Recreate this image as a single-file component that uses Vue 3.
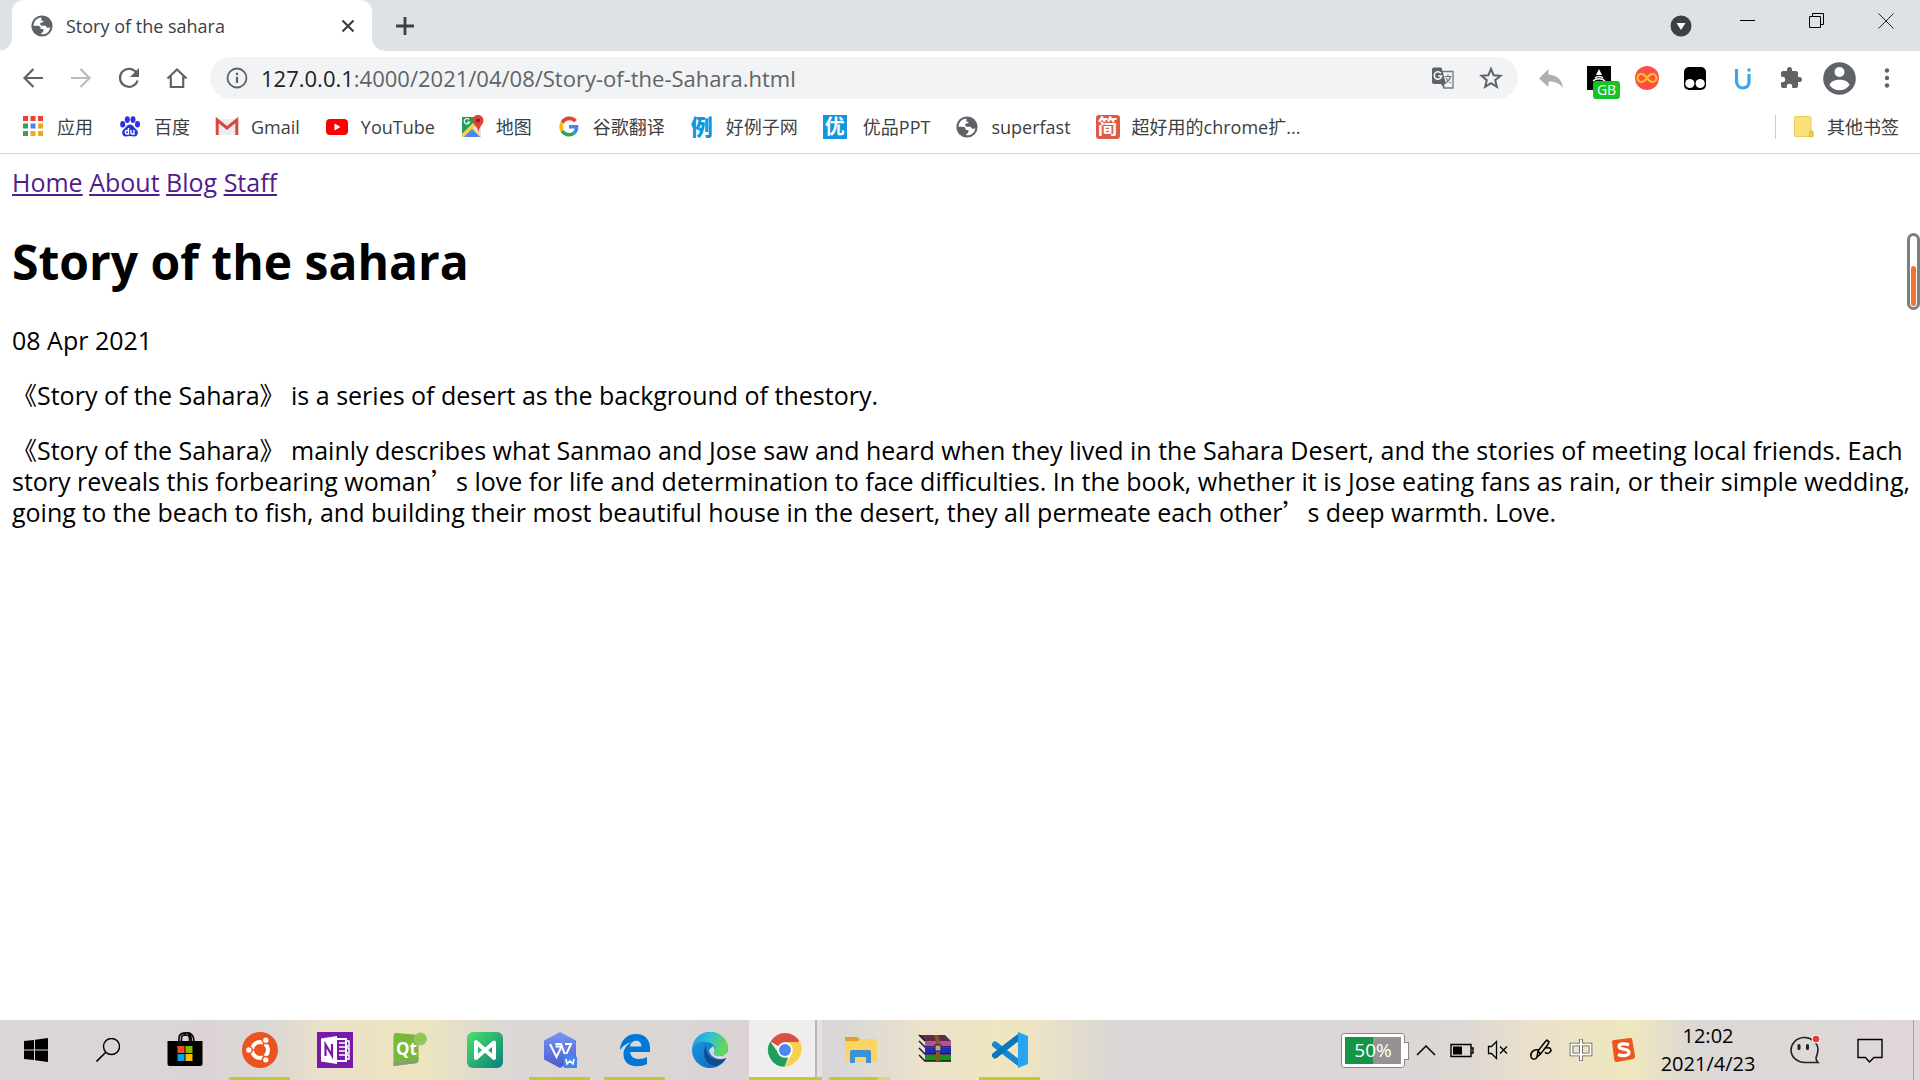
<script setup>
import { ref } from 'vue'

const tabTitle = 'Story of the sahara'
const host = '127.0.0.1'
const path = ref(':4000/2021/04/08/Story-of-the-Sahara.html')
const navLinks = ['Home', 'About', 'Blog', 'Staff']
const appSquares = [
  ['#e94235', '#e94235', '#e94235'],
  ['#34a05a', '#3d8bf0', '#f0a81c'],
  ['#34a05a', '#f0a81c', '#f0a81c'],
]
</script>

<template>
  <div class="screen">
    <header class="browser">
      <div class="tab-strip">
        <div class="tab">
          <svg class="i22" viewBox="0 0 22 22"><circle cx="11" cy="11" r="10.6" fill="#5f6368" /><path d="M10.5 2.6c-4.4.3-7.8 3.8-8 8.2h4.500c1.500 0 2.600.9 2.600 2.300v.9h2.900l-.2 2.500-2.600 2.600c5 1 9.200-2.300 9.600-7.200-1 .9-2.300 1.100-3.500.5l-1.300-1.600h-3.500c-1.100 0-1.800-.7-1.800-1.700 0-1.200.9-1.900 2-1.900h1.100V5.700h-2z" fill="#fff" /></svg>
          <span class="tab-title">{{ tabTitle }}</span>
          <button class="plain tab-close" aria-label="Close tab"><svg class="i22" viewBox="0 0 22 22"><path d="M5.500 5.500l11 11m0-11l-11 11" stroke="#3c4043" stroke-width="2.200" /></svg></button>
        </div>
        <button class="plain new-tab" aria-label="New tab"><svg class="i22" viewBox="0 0 22 22"><path d="M11 2v18M2 11h18" stroke="#3c4043" stroke-width="2.800" /></svg></button>
        <div class="window-buttons">
          <button class="plain search-tabs" aria-label="Search tabs"><svg class="i22" viewBox="0 0 22 22"><circle cx="11" cy="11" r="10.500" fill="#3c4043" /><path d="M6.500 8h9L11 15z" fill="#fff" /></svg></button>
          <button class="plain" aria-label="Minimize"><svg class="i16" viewBox="0 0 16 16"><path d="M0 7.500h15" stroke="#000" /></svg></button>
          <button class="plain" aria-label="Restore"><svg class="i16" viewBox="0 0 16 16"><path d="M.5 3.500h11v11H.5zM3.500 3.500v-3h11v11h-3" fill="none" stroke="#000" /></svg></button>
          <button class="plain" aria-label="Close window"><svg class="i16" viewBox="0 0 16 16"><path d="M.5.5l15 15m0-15l-15 15" stroke="#222" /></svg></button>
        </div>
      </div>

      <div class="toolbar">
        <button class="plain tool" aria-label="Back"><svg class="i24" viewBox="0 0 24 24"><path d="M22 12H4M12.500 3L3.500 12l9 9" fill="none" stroke="#5f6368" stroke-width="2.200" /></svg></button>
        <button class="plain tool" aria-label="Forward"><svg class="i24" viewBox="0 0 24 24"><path d="M2 12h18M11.500 3l9 9-9 9" fill="none" stroke="#babcbe" stroke-width="2.200" /></svg></button>
        <button class="plain tool" aria-label="Reload"><svg class="i24" viewBox="0 0 24 24"><path d="M19.600 7A9 9 0 1 0 20.600 14.500" fill="none" stroke="#5f6368" stroke-width="2.200" /><path d="M22 2v9h-9z" fill="#5f6368" /></svg></button>
        <button class="plain tool" aria-label="Home"><svg class="i24" viewBox="0 0 24 24"><path d="M2.500 12.500L12 3.500l9.500 9M5.800 10.500V21h12.400V10.500" fill="none" stroke="#5f6368" stroke-width="2.200" /></svg></button>
        <div class="omnibox">
          <svg class="i22" viewBox="0 0 22 22"><circle cx="11" cy="11" r="9.500" fill="none" stroke="#5f6368" stroke-width="1.800" /><path d="M11 9.700v6.300M11 5.800v2.200" stroke="#5f6368" stroke-width="2.200" /></svg>
          <label class="url"><span>{{ host }}</span><input v-model="path" aria-label="Address" /></label>
          <button class="plain tool" aria-label="Translate this page"><svg class="i24" viewBox="0 0 24 24"><path d="M11 5.500h11v16.500H13z" fill="#f1f3f4" stroke="#76797d" stroke-width="1.300" /><path d="M13.500 10.500h7M17 8.500v2M19.500 10.500c-.7 3-2.500 5-5 6.500M15 12c1 2.500 2.500 4 5 5" fill="none" stroke="#76797d" stroke-width="1.200" /><path d="M3 1.500h7.500L15 18H3a2 2 0 0 1-2-2V3.500a2 2 0 0 1 2-2z" fill="#5f6368" /><path d="M10 18l3 4.500V18z" fill="#5f6368" /><path d="M9.800 7.200A3.700 3.700 0 1 0 10.600 10H7.200" fill="none" stroke="#fff" stroke-width="1.500" /></svg></button>
          <button class="plain tool" aria-label="Bookmark this page"><svg class="i24" viewBox="0 0 24 24"><path d="M12 2.800l2.600 6.400 6.900.5-5.300 4.500 1.700 6.700L12 17.200l-5.900 3.700 1.700-6.700L2.500 9.700l6.900-.5z" fill="none" stroke="#5f6368" stroke-width="2" /></svg></button>
        </div>
        <button class="plain tool" aria-label="Undo"><svg class="i24" viewBox="0 0 24 24"><path d="M0 12.500L9.500 3v5.500C18 9 23 13.500 24 22c-3.500-5-7.500-6.500-14.500-6.500V21z" fill="#adafb1" /></svg></button>
        <button class="plain tool badge-host" aria-label="Proxy">
          <svg class="i24" viewBox="0 0 24 24"><path d="M0 0h24v24H0z" fill="#000" /><path d="M12 3l3 6H9z" fill="#fff" /><path d="M8 12c2-2 6-2 8 0M6 15c3-3 9-3 12 0" fill="none" stroke="#fff" stroke-width="1.300" /></svg>
          <span class="badge">GB</span>
        </button>
        <button class="plain tool" aria-label="Infinity"><svg class="i24" viewBox="0 0 24 24"><circle cx="12" cy="12" r="12" fill="#fc4f4b" /><path d="M12 12c-2-3-3.500-4-5.500-4a4 4 0 0 0 0 8c2 0 3.500-1 5.500-4s3.500-4 5.500-4a4 4 0 0 1 0 8c-2 0-3.500-1-5.500-4z" fill="none" stroke="#ffc21c" stroke-width="2.200" /></svg></button>
        <button class="plain tool" aria-label="Tampermonkey"><svg class="i24" viewBox="0 0 24 24"><rect x="1" y="1" width="22" height="23" rx="5" fill="#000" /><circle cx="6.800" cy="17.500" r="4.600" fill="#fff" /><circle cx="17.200" cy="17.500" r="4.600" fill="#fff" /></svg></button>
        <button class="plain tool" aria-label="uTools"><svg class="i24" viewBox="0 0 24 24"><path d="M5.500 3v12c0 4 2.500 7 6.500 7 3.500 0 6-2.500 6-6V8" fill="none" stroke="#3da4ec" stroke-width="3.200" /><path d="M16.500 2.500h3v3h-3z" fill="#3da4ec" /></svg></button>
        <button class="plain tool" aria-label="Extensions"><svg class="i24" viewBox="0 0 24 24"><path d="M20.500 11H19V7c0-1.100-.9-2-2-2h-4V3.500a2.500 2.500 0 0 0-5 0V5H4c-1.100 0-2 .9-2 2v3.800h1.500a2.700 2.700 0 0 1 0 5.400H2V20c0 1.100.9 2 2 2h3.800v-1.500a2.700 2.700 0 0 1 5.400 0V22H17c1.100 0 2-.9 2-2v-4h1.500a2.500 2.500 0 0 0 0-5z" fill="#5f6368" /></svg></button>
        <button class="plain tool" aria-label="Profile"><svg class="i33" viewBox="0 0 33 33"><circle cx="16.500" cy="16.500" r="16.300" fill="#5f6368" /><circle cx="16.500" cy="10" r="5" fill="#fff" /><path d="M6.500 23c2-7 18-7 20 0-4.500 7-15.500 7-20 0z" fill="#fff" /></svg></button>
        <button class="plain tool" aria-label="Menu"><svg class="i24" viewBox="0 0 24 24"><g fill="#5f6368"><circle cx="12" cy="4.500" r="2.200" /><circle cx="12" cy="12" r="2.200" /><circle cx="12" cy="19.500" r="2.200" /></g></svg></button>
      </div>

      <nav class="bookmarks">
        <a href="#"><svg class="i24" viewBox="0 0 24 24"><g v-for="(row, r) in appSquares" :key="r"><rect v-for="(c, i) in row" :key="i" :x="2 + i * 7.5" :y="1 + r * 7.5" width="5" height="5" :fill="c" /></g></svg>应用</a>
        <a href="#"><svg class="i24" viewBox="0 0 24 24"><g fill="#2932e1"><ellipse cx="4.700" cy="9.300" rx="2.500" ry="3.200" /><ellipse cx="9.300" cy="4.600" rx="2.500" ry="3.400" /><ellipse cx="15" cy="4.600" rx="2.500" ry="3.400" /><ellipse cx="19.500" cy="9.300" rx="2.500" ry="3.200" /><path d="M12 9.500c3 0 4 3 6.500 5 2.500 2.200 1.500 7-2 7-1.500 0-3-.4-4.500-.4s-3 .4-4.500.4c-3.500 0-4.500-4.800-2-7 2.500-2 3.500-5 6.500-5z" /></g><path d="M10.500 13v6H9a1.700 1.700 0 0 1 0-3.500h1.500M13 15v3c0 .7.500 1 1 1h2v-4" fill="none" stroke="#fff" stroke-width="1.400" /></svg>百度</a>
        <a href="#"><svg class="i24" viewBox="0 0 24 24"><path d="M2 4h20v16H2z" fill="#ededed" /><path d="M2.200 20V5L12 13l9.800-8v15" fill="none" stroke="#d94a3e" stroke-width="3" /></svg>Gmail</a>
        <a href="#"><svg class="i24" viewBox="0 0 24 24"><rect x="1" y="4" width="22" height="16" rx="4" fill="#f00" /><path d="M9.500 8.500l6 3.500-6 3.500z" fill="#fff" /></svg>YouTube</a>
        <a href="#"><svg class="i24" viewBox="0 0 24 24"><path d="M2 2h18v20H2z" fill="#e5e8ea" /><path d="M2 2h17L2 19z" fill="#279a58" /><path d="M2 19L14 8l7 13v1H2z" fill="#f6cf40" /><path d="M4 22l8-8 8 8z" fill="#4a86ef" /><path d="M13 13l8 9V7z" fill="#e1e4e7" /><path d="M18 0c3.500 0 5.500 2.500 5.500 5.500 0 4-4 5.500-5 11.500-1-6-6-7.500-6-11.500C12.500 2.500 14.500 0 18 0z" fill="#de4436" /><circle cx="18" cy="5.500" r="1.900" fill="#7c231b" /><path d="M9 4.500a2.700 2.700 0 1 0 .5 2.500H7" fill="none" stroke="#fff" stroke-width="1.200" /></svg>地图</a>
        <a href="#"><svg class="i24" viewBox="0 0 24 24"><g fill="none" stroke-width="3.600"><path d="M18.500 6.200A8 8 0 0 0 5.200 7.800" stroke="#e24335" /><path d="M5.200 7.800a8 8 0 0 0 0 8" stroke="#f5ba14" /><path d="M5.200 15.800a8 8 0 0 0 11.800 2.300" stroke="#34a353" /><path d="M17 18.100A8 8 0 0 0 19.500 11.800H12" stroke="#4285f4" /></g></svg>谷歌翻译</a>
        <a href="#"><b class="glyph li">例</b>好例子网</a>
        <a href="#" class="wide"><b class="glyph you">优</b>优品PPT</a>
        <a href="#"><svg class="i24" viewBox="-1 -1 24 24"><circle cx="11" cy="11" r="10.600" fill="#5f6368" /><path d="M10.500 2.600c-4.400.3-7.800 3.800-8 8.200h4.500c1.500 0 2.600.9 2.600 2.300v.9h2.900l-.2 2.500-2.600 2.600c5 1 9.200-2.300 9.600-7.200-1 .9-2.300 1.100-3.500.5l-1.300-1.600h-3.500c-1.100 0-1.800-.7-1.800-1.700 0-1.200.9-1.900 2-1.900h1.100V5.700h-2z" fill="#fff" /></svg>superfast</a>
        <a href="#"><b class="glyph jian">简</b>超好用的chrome扩...</a>
        <a href="#" class="other"><svg class="i24" viewBox="0 0 24 24"><path d="M4.500 1.500h14a1.500 1.500 0 0 1 1.500 1.500v12.500c1.500 0 2 .5 2 1.500v4.500H4.500a1 1 0 0 1-1-1v-18a1 1 0 0 1 1-1z" fill="#fbdf79" stroke="#eccd5c" /><path d="M18.500 21.500v-4a1.500 1.500 0 0 1 3 0v4z" fill="#f8d44f" stroke="#d9b337" /></svg>其他书签</a>
      </nav>
    </header>

    <main class="page">
      <nav class="site-nav"><template v-for="link in navLinks" :key="link"><a href="#">{{ link }}</a>{{ ' ' }}</template></nav>
      <h1>Story of the sahara</h1>
      <p>08 Apr 2021</p>
      <p>《Story of the Sahara》 is a series of desert as the background of thestory.</p>
      <p>
        《Story of the Sahara》 mainly describes what Sanmao and Jose saw and heard when they lived in the Sahara Desert, and the stories of meeting local friends. Each<br />
        story reveals this forbearing woman<span class="cjk">’</span>s love for life and determination to face difficulties. In the book, whether it is Jose eating fans as rain, or their simple wedding,<br />
        going to the beach to fish, and building their most beautiful house in the desert, they all permeate each other<span class="cjk">’</span>s deep warmth. Love.
      </p>
      <div class="gauge"><div class="gauge-fill"></div></div>
    </main>

    <footer class="taskbar">
      <button class="plain start" aria-label="Start"><svg class="i24" viewBox="0 0 24 24"><path d="M0 3l10-1v9.500H0zM11 1.800L24 0v11.500H11zM0 12.500h10V22L0 21zM11 12.500h13V24l-13-1.800z" /></svg></button>
      <button class="plain start" aria-label="Search"><svg class="i24" viewBox="0 0 24 24"><circle cx="15.500" cy="8.500" r="8" fill="none" stroke="#000" stroke-width="1.400" /><path d="M9.800 14.200L.5 23.500" stroke="#000" stroke-width="1.600" /></svg></button>
      <div class="apps">
        <button class="plain app" aria-label="Microsoft Store"><svg class="i36" viewBox="0 0 36 36"><path d="M12 10V6c0-5 8-7 11-3 1.500 2 1.500 4 1.500 7M14.500 10V6c0-4 8-4 8 0v4M17 2c5-3 10 0 10 8" fill="none" stroke="#000" stroke-width="1.600" /><path d="M.5 9h35v23a2 2 0 0 1-2 2h-31a2 2 0 0 1-2-2z" /><path d="M10.500 14H17.500v7H10.500z" fill="#f25022" /><path d="M18.500 14h7v7h-7z" fill="#7fba00" /><path d="M10.500 22h7v7h-7z" fill="#00a4ef" /><path d="M18.500 22h7v7h-7z" fill="#ffb900" /></svg></button>
        <button class="plain app open" aria-label="Ubuntu"><svg class="i36" viewBox="0 0 36 36"><circle cx="18" cy="18" r="18" fill="#e95420" /><circle cx="18" cy="18" r="8" fill="none" stroke="#fff" stroke-width="4" /><g stroke="#e95420" stroke-width="1.500"><path d="M8 18h5M23 9.300L20.500 14M23 26.700L20.500 22" /><circle cx="6.800" cy="18" r="3.400" fill="#fff" /><circle cx="23.800" cy="8.200" r="3.400" fill="#fff" /><circle cx="23.800" cy="27.800" r="3.400" fill="#fff" /></g></svg></button>
        <button class="plain app" aria-label="OneNote"><svg class="i36" viewBox="0 0 36 36"><path d="M0 0h36v36H0z" fill="#7719aa" /><path d="M20 7h9v22h-9" fill="none" stroke="#fff" stroke-width="2" /><path d="M22 11h6M22 15h6M22 19h6M22 23h6M29 9h3v5h-3M29 16h3v5h-3M29 23h3v4h-3" fill="none" stroke="#fff" stroke-width="1.500" /><path d="M4 6.500L20 4v28L4 29.500z" fill="#fff" /><path d="M8.500 24V12.500L15 23.500V12" fill="none" stroke="#7719aa" stroke-width="2.200" /></svg></button>
        <button class="plain app" aria-label="Qt"><svg class="i36" viewBox="0 0 36 36"><path d="M1.500 4c0-2 1-3 3-3l22 2v25c0 2-1 3-3 3.200L1.500 34z" fill="#78b83a" /><path d="M1.500 31l23-3 2-2v2c0 2-1 3-3 3.200L1.500 34z" fill="#8c9a83" /><path d="M25 12l-3 3" stroke="#a0a89a" stroke-width="2" /><circle cx="28.500" cy="7" r="6" fill="#8fca50" stroke="#a8b69b" /><text x="4" y="23" font-size="17" font-weight="bold" fill="#fff">Qt</text></svg></button>
        <button class="plain app" aria-label="MindMaster"><svg class="i36" viewBox="0 0 36 36"><defs><linearGradient id="mm" x2="1" y2="1"><stop stop-color="#4be16a" /><stop offset="1" stop-color="#087f7d" /></linearGradient></defs><rect width="36" height="36" rx="6" fill="url(#mm)" /><path d="M9 10v16L27 10.500V26L9 10z" fill="none" stroke="#fff" stroke-width="4" stroke-linejoin="round" /></svg></button>
        <button class="plain app open" aria-label="WPS Writer"><svg class="i36" viewBox="0 0 36 36"><defs><linearGradient id="wps" x2="0" y2="1"><stop stop-color="#7695f5" /><stop offset="1" stop-color="#4b5bcd" /></linearGradient></defs><path d="M18 0l16 8.500v19L18 36 2 27.500v-19z" fill="url(#wps)" /><path d="M8 12l6.500 13 5-10.500h-6M13.500 12h5.500l4.500 12 5.500-12h-6" fill="none" stroke="#fff" stroke-width="2" /><path d="M22 22h8l5 3v11H22z" fill="#4384ed" /><path d="M24 27l1 5 3-3 3 3 1-5" fill="none" stroke="#fff" stroke-width="1.600" /></svg></button>
        <button class="plain app open" aria-label="Edge Legacy"><svg class="i36" viewBox="0 0 36 36"><path d="M3 16C5 6.500 11 2 19 2c9 0 14 6 14 14v4H13c1 5 4 7 9 7 3.500 0 6-.8 8-2v7c-3 1.500-6 2.200-10 2.200-9 0-13.500-5-13.500-12 0-5 3-9.500 8-12-5 1-9 3.500-11.500 7.800zM13 14.500h11.500C24.500 6.500 14 7 13 14.500z" fill="#0078d7" fill-rule="evenodd" /></svg></button>
        <button class="plain app" aria-label="Edge"><svg class="i36" viewBox="0 0 36 36"><defs><linearGradient id="et" x2="1" y2=".3"><stop stop-color="#1d9be8" /><stop offset=".5" stop-color="#2fc3d2" /><stop offset="1" stop-color="#66d853" /></linearGradient><linearGradient id="eb" x2="1" y2="1"><stop stop-color="#1b9de2" /><stop offset="1" stop-color="#0a63bd" /></linearGradient></defs><circle cx="18" cy="18" r="18" fill="url(#eb)" /><path d="M1 12C4 4 11 0 18 0c10 0 18 7 18 16 0 5-4 8-8 8-4 0-7-1-6-3 3-5 0-9-5-10.500C11 8.500 4 10 1 15z" fill="url(#et)" /><path d="M14 14c-4 5-2 19 9 20 5-.5 9-4 11-8-9 4-20 1-20-12z" fill="#114b90" /><path d="M22 21c-1 2 2 3 6 3 3 0 7-2 8-6v7l-2 1c-6 3-16 0-17-8l4-4c2 2 2 5 1 7z" fill="#dcd7d8" /></svg></button>
        <button class="plain app open active" aria-label="Chrome"><svg class="i36" viewBox="0 0 36 36"><path d="M18 18L3.500 9.500a17 17 0 0 1 29-.5z" fill="#d94f43" /><path d="M3.300 9.500L12 22l9 4-3.500 8.700A16.700 16.700 0 0 1 3.300 9.500z" fill="#1f9d5a" /><path d="M18 10h15.300c2.400 5 1.600 13-3 18-3 3.500-8 6.700-12.800 6.700L25 22z" fill="#f9cf4f" /><circle cx="18" cy="18" r="7.800" fill="#fff" /><circle cx="18" cy="18" r="6" fill="#4b87f0" /></svg></button>
        <button class="plain app open grouped" aria-label="File Explorer"><svg class="i36" viewBox="0 0 36 36"><path d="M3 5h12l3 2-2 4H3z" fill="#dba32c" /><path d="M3 9h13l2-2h17v23H3z" fill="#fcd462" /><path d="M8 31V20a2 2 0 0 1 2-2h17a2 2 0 0 1 2 2v11h-5v-6H13v6z" fill="#3b92d8" /></svg></button>
        <button class="plain app" aria-label="WinRAR"><svg class="i36" viewBox="0 0 36 36"><path d="M2 3h26l6 6H8z" fill="#5c2d49" /><path d="M8 9h26v6H8z" fill="#b4519f" /><path d="M8 16h26v6H8z" fill="#1f2bc4" /><path d="M8 23h26v6H8z" fill="#159417" /><path d="M2 3l6 6v20l-6-6z" fill="#e4dfdc" /><path d="M2 9l6 6h26M2 16l6 6h26M2 23l6 6h26M2 3l6 6" fill="none" stroke="#181422" stroke-width="1.400" /><path d="M17 3h4l2 6v20h-4V9z" fill="#8c5424" /><rect x="18" y="13" width="6" height="6" fill="#aaa" stroke="#222" /></svg></button>
        <button class="plain app open" aria-label="Visual Studio Code"><svg class="i36" viewBox="0 0 36 36"><path d="M3 12.500L27 31" stroke="#1588d1" stroke-width="6" stroke-linecap="round" /><path d="M3 23.500L27 5" stroke="#0a76bd" stroke-width="6" stroke-linecap="round" /><path d="M26 0l10 4v28l-10 4z" fill="#27a5f2" /></svg></button>
      </div>

      <div class="tray">
        <div class="battery"><span>50%</span></div>
        <button class="plain t-chevron" aria-label="Show hidden icons"><svg class="i20" viewBox="0 0 20 20"><path d="M1 15l9-9 9 9" fill="none" stroke="#000" stroke-width="1.500" /></svg></button>
        <button class="plain t-power" aria-label="Power"><svg class="i24" viewBox="0 0 24 24"><path d="M1 6.500h20v12H1zM21.500 10h1.500v5h-1.500" fill="none" stroke="#000" stroke-width="1.400" /><path d="M3 8.500h9v8H3z" /></svg></button>
        <button class="plain t-sound" aria-label="Volume muted"><svg class="i24" viewBox="0 0 24 24"><path d="M2.500 8.500h3l5-5v17l-5-5h-3zM14 8.500l7 7m0-7l-7 7" fill="none" stroke="#000" stroke-width="1.300" /></svg></button>
        <button class="plain t-pen" aria-label="Ink workspace"><svg class="i24" viewBox="0 0 24 24"><path d="M8 19l1-6 7-9 2-2 2 2-1.500 3-7 9zM9 13l2.500 3M9.500 12C4 11 1 15 2 19c1 3 5 3 6 0M17 10c5-1 6 2 4 4s-4 2-5 0" fill="none" stroke="#000" stroke-width="1.500" /></svg></button>
        <button class="plain t-ime" aria-label="Input language"><svg class="i24" viewBox="0 0 24 24"><path d="M2.500 6.500h19v10h-19zM12 1v22" fill="none" stroke="#555" stroke-width="3.600" /><path d="M2.500 6.500h19v10h-19zM12 1.500v21" fill="none" stroke="#fff" stroke-width="2" /></svg></button>
        <button class="plain t-sogou" aria-label="Sogou"><svg class="i24" viewBox="0 0 24 24"><path d="M1 4c0-1 .5-2 2-2l16-2c1.500 0 2 .5 2.300 2L24 18c0 2-.5 2.500-2 3L6 24c-1.500 0-2.500-.5-2.700-2z" fill="#ef5521" /><path d="M18 7c-4-2-10-1.500-10 1.500 0 4 10 1 10 6 0 3.500-7 4-11 2" fill="none" stroke="#fff" stroke-width="3.200" /></svg></button>
        <time class="clock"><span>12:02</span><span>2021/4/23</span></time>
        <button class="plain t-ghost" aria-label="Assistant"><svg class="i30" viewBox="0 0 30 30"><path d="M28 27.500H15A13.500 12.500 0 1 1 28 14c0 4-1 6-2 9 0 2 .5 3 2 4.500z" fill="none" stroke="#222" stroke-width="1.600" /><path d="M9 10.500v3M17.500 10.500v3" stroke="#222" stroke-width="3" stroke-linecap="round" /><circle cx="26" cy="4" r="4" fill="#e8393c" stroke="#fff" /></svg></button>
        <button class="plain t-note" aria-label="Notifications"><svg class="i26" viewBox="0 0 26 26"><path d="M1 2.500h24v18h-8L12.500 25 8.500 20.500H1z" fill="none" stroke="#000" stroke-width="1.400" /></svg></button>
      </div>
      <button class="plain desktop" aria-label="Show desktop"></button>
    </footer>
  </div>
</template>

<style>
body {
  margin: 0;
  background: #fff;
}
</style>

<style scoped>
.screen {
  display: flex;
  flex-direction: column;
  min-height: 100vh;
  font-family: "Open Sans", "Noto Sans CJK SC", sans-serif;
  color: #000;
}
svg {
  display: block;
  flex: none;
}
.plain {
  display: flex;
  align-items: center;
  justify-content: center;
  padding: 0;
  border: 0;
  background: none;
  font: inherit;
}
.i16 { width: 16px; height: 16px; }
.i20 { width: 20px; height: 20px; }
.i22 { width: 22px; height: 22px; }
.i24 { width: 24px; height: 24px; }
.i26 { width: 26px; height: 26px; }
.i30 { width: 30px; height: 30px; }
.i33 { width: 33px; height: 33px; }
.i36 { width: 36px; height: 36px; }

.browser {
  border-bottom: 1px solid #d5d7da;
}
.tab-strip {
  display: flex;
  height: 51px;
  background: #dee1e6;
}
.tab {
  position: relative;
  display: flex;
  align-items: center;
  box-sizing: border-box;
  width: 360px;
  margin-left: 12px;
  padding: 0 13px 0 19px;
  border-radius: 12px 12px 0 0;
  background: #fff;
  font-size: 18px;
  color: #3c4043;
}
.tab::before,
.tab::after {
  content: "";
  position: absolute;
  bottom: 0;
  width: 12px;
  height: 12px;
}
.tab::before {
  left: -12px;
  background: radial-gradient(circle at 0 0, #dee1e6 11px, #fff 12px);
}
.tab::after {
  right: -12px;
  background: radial-gradient(circle at 100% 0, #dee1e6 11px, #fff 12px);
}
.tab-title {
  flex: 1;
  margin-left: 13px;
}
.new-tab {
  width: 66px;
}
.window-buttons {
  display: flex;
  margin-left: auto;
  height: 42px;
}
.window-buttons .plain {
  width: 69px;
}
.window-buttons .search-tabs {
  width: 64px;
  height: 51px;
}

.toolbar {
  display: flex;
  align-items: center;
  height: 54px;
  padding: 0 9px;
}
.tool {
  width: 48px;
  height: 42px;
}
.omnibox {
  display: flex;
  flex: 1;
  align-items: center;
  height: 42px;
  margin: 0 9px;
  padding: 0 3px 0 16px;
  border-radius: 21px;
  background: #f1f3f4;
}
.url {
  display: flex;
  flex: 1;
  margin-left: 13px;
  font-size: 22px;
  color: #202124;
}
.url input {
  flex: 1;
  padding: 0;
  border: 0;
  outline: 0;
  background: none;
  font: inherit;
  color: #5f6368;
}
.badge-host {
  position: relative;
}
.badge {
  position: absolute;
  left: 18px;
  top: 24px;
  width: 27px;
  height: 18px;
  border-radius: 3px;
  background: #14c424;
  color: #fff;
  font-size: 14px;
  line-height: 18px;
}

.bookmarks {
  display: flex;
  align-items: center;
  gap: 25px;
  height: 44px;
  padding: 0 21px 4px;
}
.bookmarks a {
  display: flex;
  align-items: center;
  gap: 12px;
  font-size: 18px;
  line-height: 24px;
  color: #3c4043;
  text-decoration: none;
  white-space: nowrap;
}
.bookmarks .wide {
  gap: 16px;
}
.glyph {
  width: 24px;
  height: 24px;
  font-size: 20px;
  line-height: 23px;
  text-align: center;
  color: #fff;
}
.li {
  font-size: 22px;
  font-weight: 900;
  color: #0f96dc;
}
.you {
  background: #0f96dc;
}
.jian {
  border-radius: 3px;
  background: #dd5b45;
}
.bookmarks .other {
  margin-left: auto;
  padding-left: 15px;
  border-left: 1px solid #c9cccf;
}

.page {
  position: relative;
  flex: 1;
  padding: 13px 12px;
  font-size: 25px;
  line-height: 31px;
}
.site-nav a {
  color: #551a8b;
  text-underline-offset: 2px;
}
h1 {
  margin: 32px 0;
  font-size: 48px;
  line-height: 63px;
}
.page p {
  margin: 24px 0;
  white-space: nowrap;
}
.cjk {
  font-family: "Noto Sans CJK SC", sans-serif;
  line-height: 0;
}
.gauge {
  position: absolute;
  right: 0;
  top: 79px;
  display: flex;
  align-items: flex-end;
  box-sizing: border-box;
  width: 13px;
  height: 77px;
  padding: 1px;
  border: 3px solid #7f7f7f;
  border-radius: 7px;
}
.gauge-fill {
  width: 100%;
  height: 40px;
  border-radius: 3px;
  background: #f0742c;
}

.taskbar {
  display: flex;
  height: 60px;
  background: linear-gradient(90deg, #dbd6d7 0, #dcd4d4 11%, #dbd8d5 14%, #ebe0ca 17%, #ece5be 22%, #dcd8d5 26%, #dbd3d4 40%, #dad7d8 44%, #ebe2ca 48%, #efe6bf 53%, #dad7d6 58%, #dcd5d5 64%, #ddd6d6 70%, #dcd8d4 76%, #ebe0cb 80%, #efe7bd 85%, #dcd9d5 88%, #dfd6d8 100%);
}
.start {
  width: 72px;
}
.apps {
  display: flex;
  margin-left: 3px;
}
.app {
  box-sizing: border-box;
  width: 75px;
  border-bottom: 3px solid transparent;
  border-top: 3px solid transparent;
}
.app.open {
  background: linear-gradient(#c5c832, #c5c832) 50% 100% / 61px 3px no-repeat border-box;
}
.app.open.grouped {
  background: linear-gradient(90deg, #c5c832 49px, #d5d77a 49px) 50% 100% / 61px 3px no-repeat border-box;
}
.app.open.active {
  background: linear-gradient(#c5c832, #c5c832) 100% 100% / 73px 3px no-repeat border-box,
    linear-gradient(90deg, transparent 2px, #f0eded 2px, #f0eded 68px, #b9b6b7 68px, #b9b6b7 70px, #e6e2e2 70px) border-box;
}
.tray {
  display: flex;
  align-items: center;
  margin-left: auto;
}
.battery {
  position: relative;
  box-sizing: border-box;
  width: 64px;
  height: 35px;
  margin-right: 10px;
  border: 4px solid #fff;
  outline: 1px solid #888;
  outline-offset: -1px;
  border-radius: 3px;
  background: linear-gradient(90deg, #159546 50%, #969293 50%);
  color: #fff;
  font-size: 19px;
  line-height: 26px;
  text-align: center;
}
.battery::after {
  content: "";
  position: absolute;
  right: -8px;
  top: 5px;
  width: 4px;
  height: 16px;
  background: #fff;
  border: 1px solid #888;
  border-left: 0;
}
.t-chevron { width: 22px; }
.t-power { width: 50px; }
.t-sound { width: 22px; }
.t-pen { width: 63px; }
.t-ime { width: 18px; }
.t-sogou { width: 66px; }
.clock {
  display: flex;
  flex-direction: column;
  align-items: center;
  width: 104px;
  font-size: 20px;
  line-height: 28px;
}
.t-ghost { width: 90px; }
.t-note { width: 40px; }
.desktop {
  width: 7px;
  margin-left: 23px;
  border-left: 1px solid #a5a0a1;
}
</style>
